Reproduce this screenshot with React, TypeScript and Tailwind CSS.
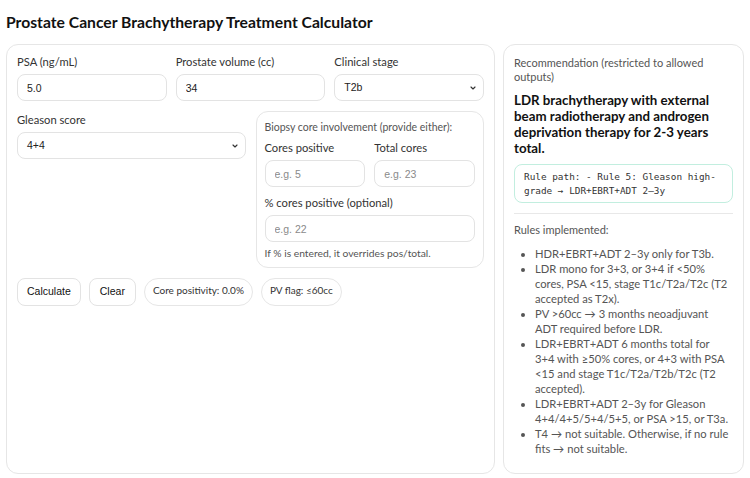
import { ChevronDown } from 'lucide-react';

const inputCls =
  "h-[27px] w-full rounded-lg border border-[#e3e3e3] bg-white px-[9px] text-[10.5px] text-[#222] placeholder:text-[#8a8a8a] outline-none font-['Liberation_Sans',Arial,sans-serif]";

const Field = ({ label, value, placeholder }: { label: string; value?: string; placeholder?: string }) => (
  <div className="flex flex-col">
    <label className="text-[11.2px] text-[#333] leading-[16px] mb-[4px]">{label}</label>
    <input readOnly defaultValue={value} placeholder={placeholder} className={inputCls} />
  </div>
);

const Select = ({ label, value }: { label: string; value: string }) => (
  <div className="flex flex-col">
    <label className="text-[11.2px] text-[#333] leading-[16px] mb-[4px]">{label}</label>
    <div className="relative">
      <div className={inputCls + ' flex items-center'}>{value}</div>
      <ChevronDown className="absolute right-[7px] top-[10px] w-[8px] h-[8px] text-[#333]" strokeWidth={3.5} />
    </div>
  </div>
);

const heading = [
  'LDR brachytherapy with external',
  'beam radiotherapy and androgen',
  'deprivation therapy for 2-3 years',
  'total.',
];

const rules = [
  ['HDR+EBRT+ADT 2–3y only for T3b.'],
  ['LDR mono for 3+3, or 3+4 if <50%', 'cores, PSA <15, stage T1c/T2a/T2c (T2', 'accepted as T2x).'],
  ['PV >60cc → 3 months neoadjuvant', 'ADT required before LDR.'],
  [
    'LDR+EBRT+ADT 6 months total for',
    '3+4 with ≥50% cores, or 4+3 with PSA',
    '<15 and stage T1c/T2a/T2b/T2c (T2',
    'accepted).',
  ],
  ['LDR+EBRT+ADT 2–3y for Gleason', '4+4/4+5/5+4/5+5, or PSA >15, or T3a.'],
  ['T4 → not suitable. Otherwise, if no rule', 'fits → not suitable.'],
];

const Pill = ({ children }: { children: React.ReactNode }) => (
  <span className="h-[28px] px-[8px] pt-[4px] rounded-full border border-[#e6e6e6] text-[10px] leading-[14px] text-[#333]">
    {children}
  </span>
);

export default function App() {
  return (
    <div className="w-[750px] h-[478px] bg-white px-[6px] pt-[11px] font-['Lato',sans-serif] text-[#111] overflow-hidden">
      <h1 className="text-[15.7px] font-bold leading-[22px] text-[#111]">
        Prostate Cancer Brachytherapy Treatment Calculator
      </h1>

      <div className="mt-[11px] flex gap-[8px]">
        {/* Left card - inputs */}
        <div className="w-[489px] h-[430px] rounded-xl border border-[#e6e6e6] px-[10px] pt-[9px]">
          <div className="grid grid-cols-3 gap-[9px]">
            <Field label="PSA (ng/mL)" value="5.0" />
            <Field label="Prostate volume (cc)" value="34" />
            <Select label="Clinical stage" value="T2b" />
          </div>

          <div className="mt-[10px] grid grid-cols-2 gap-[10px] items-start">
            <div className="pt-[1px]">
              <Select label="Gleason score" value="4+4" />
            </div>
            <div className="rounded-xl border border-[#e6e6e6] px-[8px] pt-[8px] pb-[7px]">
              <div className="text-[10.5px] text-[#555] leading-[15px] mb-[5px] whitespace-nowrap">
                Biopsy core involvement (provide either):
              </div>
              <div className="grid grid-cols-2 gap-[9px]">
                <Field label="Cores positive" placeholder="e.g. 5" />
                <Field label="Total cores" placeholder="e.g. 23" />
              </div>
              <div className="mt-[8px]">
                <Field label="% cores positive (optional)" placeholder="e.g. 22" />
              </div>
              <div className="mt-[4px] text-[10.3px] text-[#555] leading-[14px]">
                If % is entered, it overrides pos/total.
              </div>
            </div>
          </div>

          <div className="mt-[10px] flex items-start gap-[8px]">
            <button className="h-[28px] px-[9px] rounded-lg border border-[#e3e3e3] bg-white text-[10.5px] text-[#111] font-['Liberation_Sans',Arial,sans-serif]">
              Calculate
            </button>
            <button className="h-[28px] px-[10px] rounded-lg border border-[#e3e3e3] bg-white text-[10.5px] text-[#111] font-['Liberation_Sans',Arial,sans-serif]">
              Clear
            </button>
            <Pill>Core positivity: 0.0%</Pill>
            <Pill>PV flag: ≤60cc</Pill>
          </div>
        </div>

        {/* Right card - result */}
        <div className="w-[241px] h-[430px] rounded-xl border border-[#e6e6e6] px-[10px] pt-[11px]">
          <div className="text-[11px] text-[#555] leading-[14px]">
            Recommendation (restricted to allowed
            <br />
            outputs)
          </div>
          <div className="mt-[8px] text-[13.3px] font-bold leading-[16px] text-[#111]">
            {heading.map((l) => (
              <span key={l} className="block whitespace-nowrap">
                {l}
              </span>
            ))}
          </div>
          <div className="mt-[8px] rounded-lg border border-[#c2eedf] px-[9px] pt-[5px] pb-[4px] text-[9.4px] leading-[14px] text-[#333] font-['DejaVu_Sans_Mono',monospace]">
            <span className="block whitespace-nowrap">Rule path: - Rule 5: Gleason high-</span>
            <span className="block whitespace-nowrap">grade → LDR+EBRT+ADT 2–3y</span>
          </div>
          <div className="mt-[10px] h-px bg-[#e8e8e8]" />
          <div className="mt-[9px] text-[11px] text-[#555] leading-[14px]">Rules implemented:</div>
          <ul className="mt-[9px] pl-[21px] list-disc text-[11.2px] leading-[15px] text-[#555]">
            {rules.map((r) => (
              <li key={r[0]}>
                {r.map((l) => (
                  <span key={l} className="block whitespace-nowrap">
                    {l}
                  </span>
                ))}
              </li>
            ))}
          </ul>
        </div>
      </div>
    </div>
  );
}
